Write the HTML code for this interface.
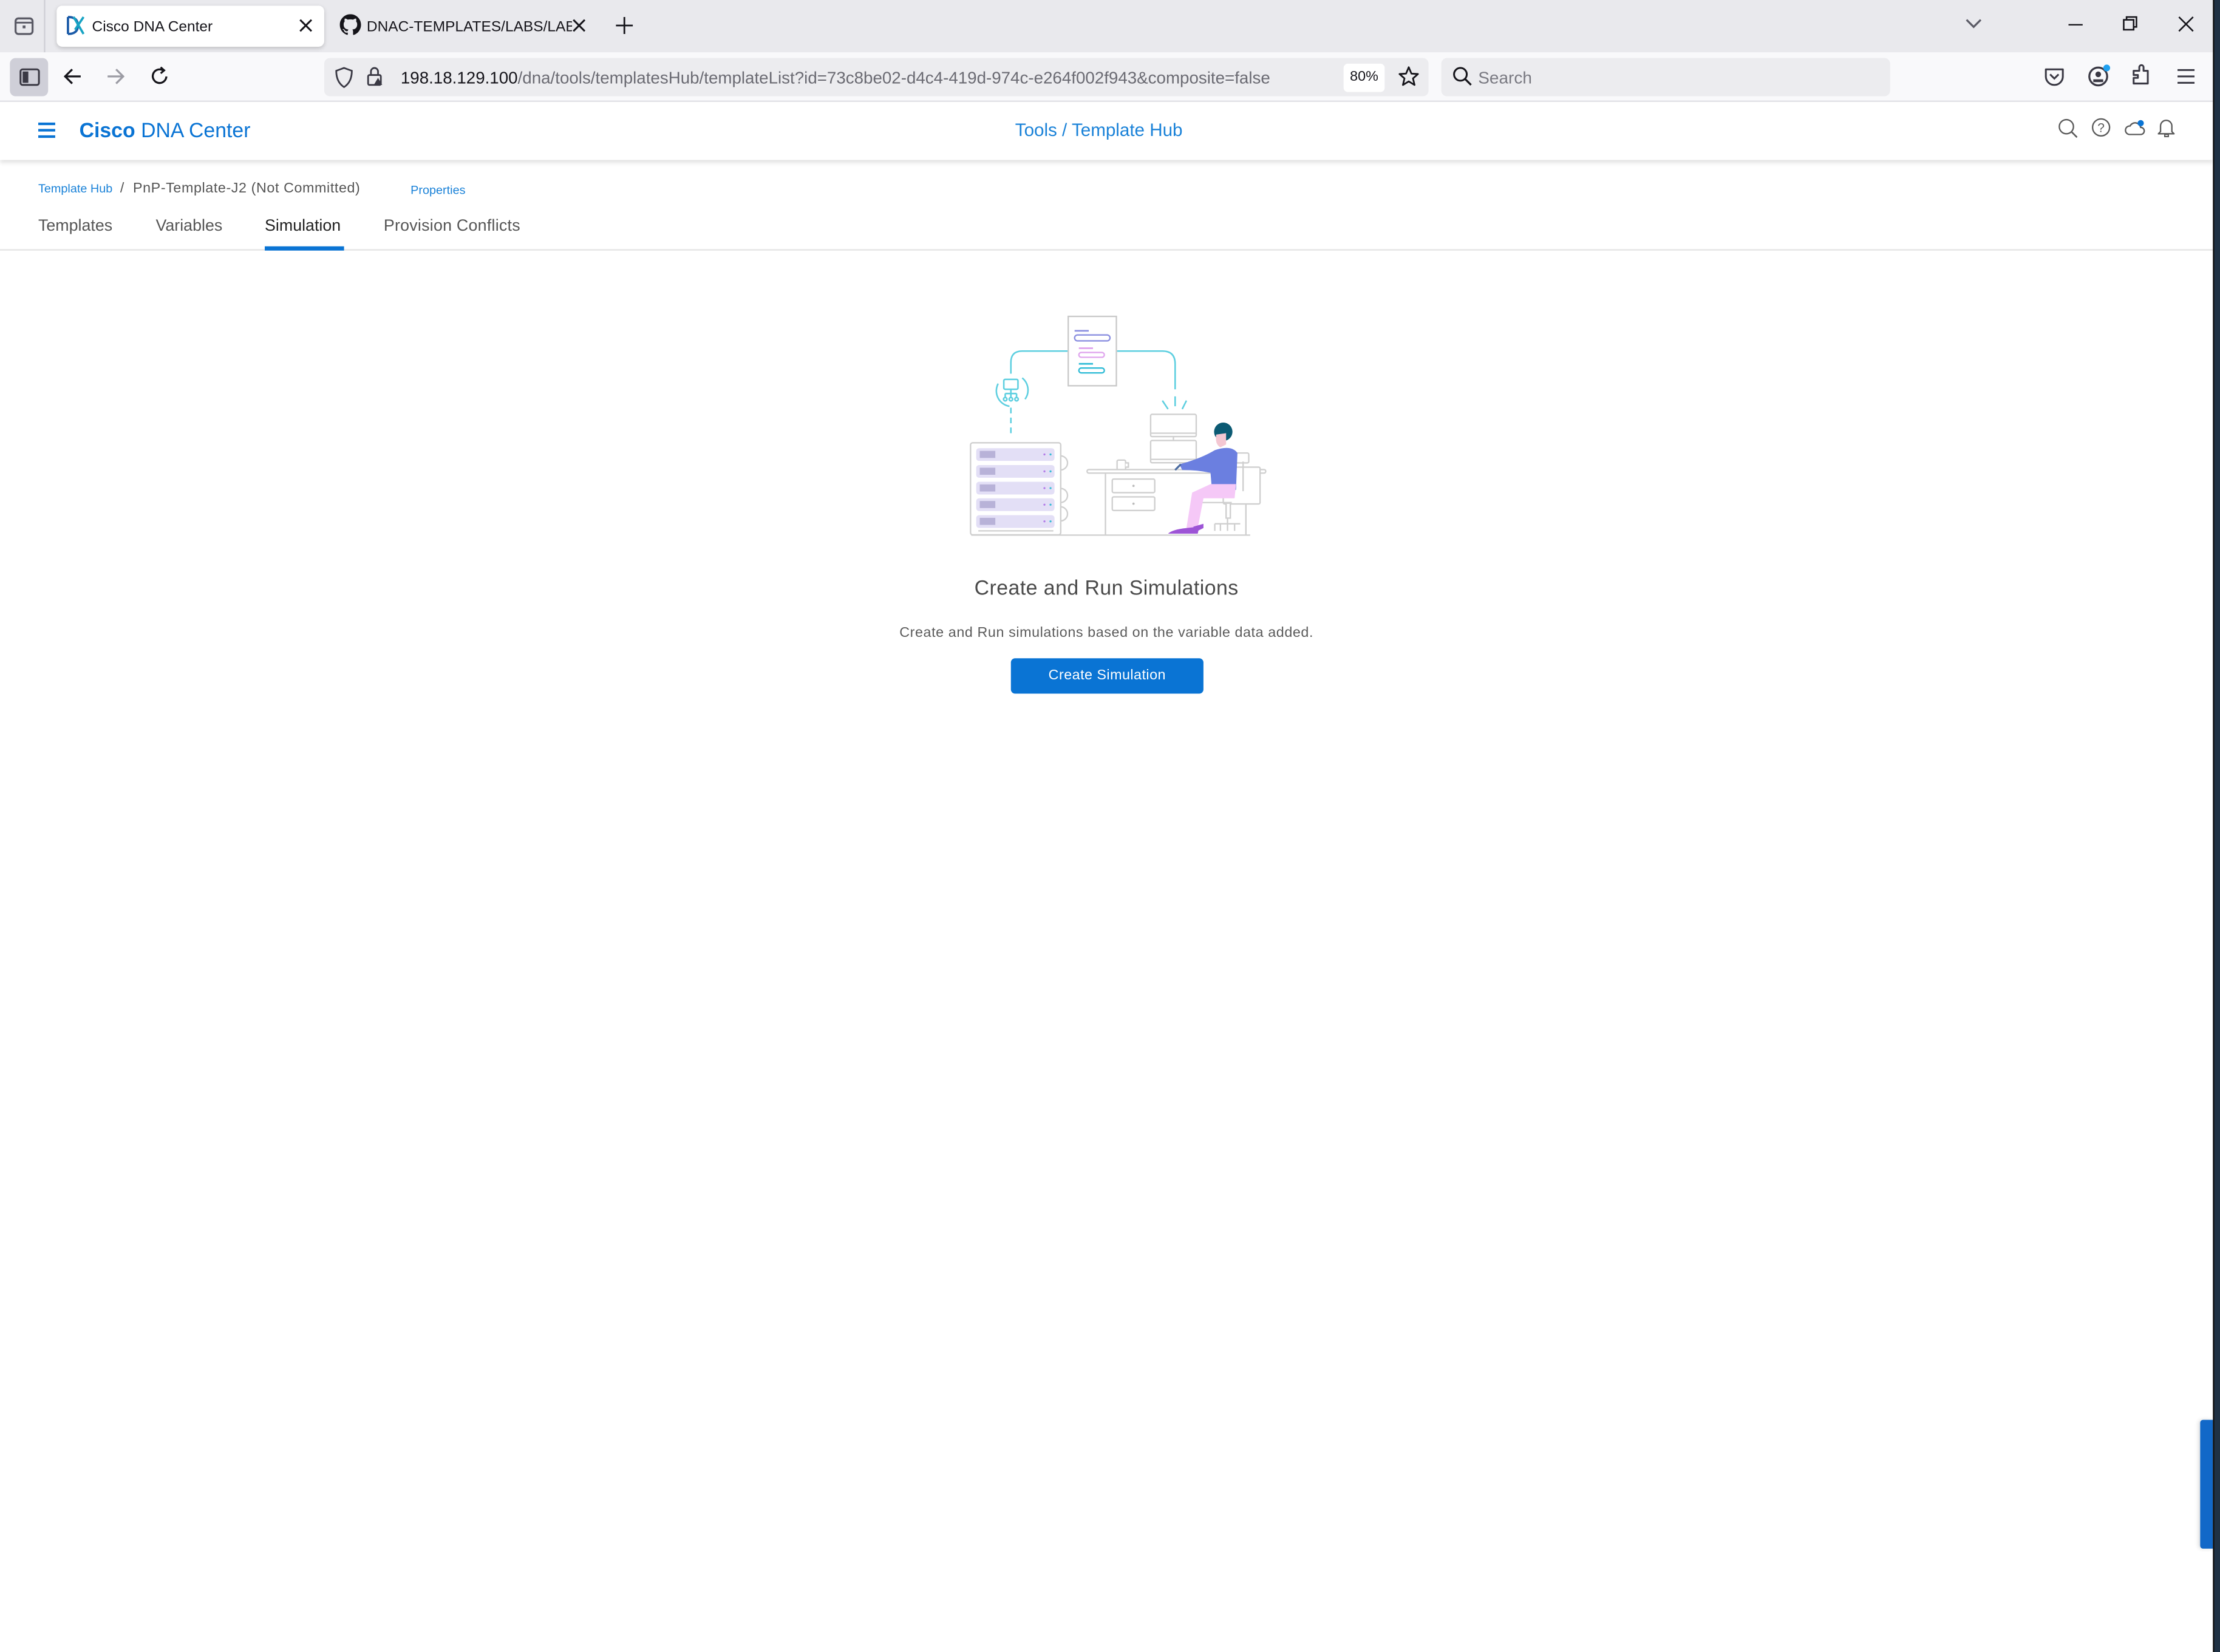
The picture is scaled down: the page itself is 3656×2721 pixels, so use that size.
<!DOCTYPE html>
<html><head><meta charset="utf-8">
<style>
html,body{margin:0;padding:0;width:3656px;height:2720px;overflow:hidden;background:#fff;font-family:"Liberation Sans",Arial,sans-serif;}
#w{position:absolute;left:0;top:0;width:1568px;height:1167px;transform:scale(2.33163);transform-origin:0 0;background:#fff;overflow:hidden;}
.a{position:absolute;white-space:nowrap;}
</style></head><body><div id="w">
<!-- tab bar -->
<div class="a" style="left:0;top:0;width:1568px;height:37px;background:#e9e9ed;"></div>
<svg class="a" style="left:9px;top:10px" width="16" height="16" viewBox="0 0 16 16"><rect x="2" y="3" width="12" height="11" rx="2" fill="none" stroke="#5b5b66" stroke-width="1.4"/><line x1="2" y1="6" x2="14" y2="6" stroke="#5b5b66" stroke-width="1.2"/><rect x="7" y="8" width="2" height="2" fill="#5b5b66"/></svg>
<div class="a" style="left:31px;top:0;width:1px;height:37px;background:#cfcfd6"></div>
<div class="a" style="left:40px;top:4px;width:189px;height:29px;background:#fff;border-radius:4px;box-shadow:0 1px 3px rgba(0,0,0,.18)"></div>
<svg class="a" style="left:47px;top:11px" width="14" height="14" viewBox="0 0 14 14"><path d="M1 1 L1 13 M1 1 Q8 1 8 7 Q8 13 1 13" fill="none" stroke="#1b5ba8" stroke-width="1.6"/><path d="M5 1 L12 13 M12 1 L6 10" fill="none" stroke="#17a3c3" stroke-width="1.6"/></svg>
<div class="a" style="left:65px;top:12.5px;font-size:10.5px;color:#15141a">Cisco DNA Center</div>
<svg class="a" style="left:211px;top:13px" width="10" height="10"><path d="M1 1 L9 9 M9 1 L1 9" stroke="#15141a" stroke-width="1.3"/></svg>
<svg class="a" style="left:240px;top:10px" width="15" height="15" viewBox="0 0 16 16"><path fill="#15141a" d="M8 0C3.58 0 0 3.58 0 8c0 3.54 2.290 6.530 5.470 7.590.4.07.55-.17.55-.38v-1.33c-2.23.48-2.7-1.07-2.7-1.07-.36-.93-.89-1.170-.89-1.170-.73-.5.05-.49.05-.49.8.06 1.230.83 1.230.83.72 1.220 1.870.87 2.330.66.07-.52.28-.87.5-1.070-1.780-.2-3.640-.89-3.640-3.950 0-.87.31-1.590.82-2.150-.08-.2-.36-1.020.08-2.120 0 0 .67-.21 2.2.82.64-.18 1.320-.27 2-.27.68 0 1.360.09 2 .27 1.530-1.040 2.2-.82 2.2-.82.44 1.1.16 1.920.08 2.120.51.56.82 1.270.82 2.150 0 3.070-1.870 3.750-3.650 3.950.29.25.54.73.54 1.480v2.2c0 .21.15.46.55.38A8.013 8.013 0 0016 8c0-4.420-3.580-8-8-8z"/></svg>
<div class="a" style="left:259px;top:12.5px;font-size:10.5px;color:#15141a;width:145px;overflow:hidden">DNAC-TEMPLATES/LABS/LAB-<span style="color:#999">3</span></div>
<svg class="a" style="left:404px;top:13px" width="10" height="10"><path d="M1 1 L9 9 M9 1 L1 9" stroke="#15141a" stroke-width="1.3"/></svg>
<svg class="a" style="left:435px;top:12px" width="12" height="12"><path d="M6 0 V12 M0 6 H12" stroke="#15141a" stroke-width="1.2"/></svg>
<svg class="a" style="left:1387px;top:12px" width="14" height="10"><path d="M2 2 L7 7 L12 2" fill="none" stroke="#5b5b66" stroke-width="1.4"/></svg>
<div class="a" style="left:1461px;top:17px;width:10px;height:1.3px;background:#15141a"></div>
<svg class="a" style="left:1499px;top:11px" width="12" height="12"><rect x="1" y="3" width="7" height="7" fill="none" stroke="#15141a" stroke-width="1.1"/><path d="M3 3 V1 H10 V8 H8" fill="none" stroke="#15141a" stroke-width="1.1"/></svg>
<svg class="a" style="left:1538px;top:11px" width="12" height="12"><path d="M1 1 L11 11 M11 1 L1 11" stroke="#15141a" stroke-width="1.1"/></svg>
<!-- nav bar -->
<div class="a" style="left:0;top:37px;width:1563px;height:34px;background:#f9f9fb;border-bottom:1px solid #e0e0e6"></div>
<div class="a" style="left:7px;top:41px;width:27px;height:27px;background:#cfcfd8;border-radius:4px"></div>
<svg class="a" style="left:13px;top:47px" width="16" height="16"><rect x="1.5" y="2" width="13" height="11" rx="1.5" fill="none" stroke="#3a3944" stroke-width="1.3"/><rect x="3" y="3.5" width="4" height="8" fill="#3a3944"/></svg>
<svg class="a" style="left:43px;top:46px" width="16" height="16"><path d="M14 8 H3 M8 3 L3 8 L8 13" fill="none" stroke="#15141a" stroke-width="1.4"/></svg>
<svg class="a" style="left:74px;top:46px" width="16" height="16"><path d="M2 8 H13 M8 3 L13 8 L8 13" fill="none" stroke="#9c9ca4" stroke-width="1.4"/></svg>
<svg class="a" style="left:105px;top:46px" width="16" height="16"><path d="M12.5 8 A4.8 4.8 0 1 1 10 3.6" fill="none" stroke="#15141a" stroke-width="1.4"/><path d="M8.5 1.5 L11 3.7 L8.5 5.8" fill="none" stroke="#15141a" stroke-width="1.3"/></svg>
<div class="a" style="left:229px;top:41px;width:780px;height:27px;background:#ececef;border-radius:4px"></div>
<svg class="a" style="left:236px;top:47px" width="14" height="16"><path d="M7 1 L12.5 3 Q12.5 11 7 14.5 Q1.5 11 1.5 3 Z" fill="none" stroke="#3a3944" stroke-width="1.2"/></svg>
<svg class="a" style="left:258px;top:46px" width="14" height="16"><rect x="2" y="7" width="9" height="7" rx="1" fill="none" stroke="#3a3944" stroke-width="1.2"/><path d="M4 7 V4.5 A2.5 2.5 0 0 1 9 4.5 V7" fill="none" stroke="#3a3944" stroke-width="1.2"/><path d="M9 9 L12 14 H6 Z" fill="#3a3944"/></svg>
<div class="a" style="left:283px;top:48px;font-size:11.9px;color:#15141a">198.18.129.100<span style="color:#6b6b73">/dna/tools/templatesHub/templateList?id=73c8be02-d4c4-419d-974c-e264f002f943&amp;composite=false</span></div>
<div class="a" style="left:949px;top:45px;width:29px;height:20px;background:#fff;border-radius:3px;font-size:10px;line-height:20px;text-align:center;color:#15141a">80%</div>
<svg class="a" style="left:987px;top:46px" width="16" height="16"><path d="M8 1.5 L9.9 6 L14.5 6.3 L11 9.4 L12.1 14 L8 11.5 L3.9 14 L5 9.4 L1.5 6.3 L6.1 6 Z" fill="none" stroke="#15141a" stroke-width="1.2" stroke-linejoin="round"/></svg>
<div class="a" style="left:1018px;top:41px;width:317px;height:27px;background:#ececef;border-radius:4px"></div>
<svg class="a" style="left:1025px;top:46px" width="16" height="16"><circle cx="6.5" cy="6.5" r="4.5" fill="none" stroke="#15141a" stroke-width="1.3"/><path d="M10 10 L14 14" stroke="#15141a" stroke-width="1.4"/></svg>
<div class="a" style="left:1044px;top:48px;font-size:12px;color:#7a7a82">Search</div>
<svg class="a" style="left:1443px;top:46px" width="16" height="16"><path d="M2 3 H14 V8 A6 6 0 0 1 2 8 Z" fill="none" stroke="#3a3944" stroke-width="1.3" stroke-linejoin="round"/><path d="M5 6.5 L8 9.5 L11 6.5" fill="none" stroke="#3a3944" stroke-width="1.3"/></svg>
<svg class="a" style="left:1474px;top:45px" width="18" height="18"><circle cx="8" cy="9" r="6.3" fill="none" stroke="#3a3944" stroke-width="1.4"/><circle cx="8" cy="7.5" r="2" fill="#3a3944"/><path d="M4.5 12 H11.5" stroke="#3a3944" stroke-width="2"/><circle cx="14" cy="3" r="2.4" fill="#1ea0f0"/></svg>
<svg class="a" style="left:1505px;top:45px" width="16" height="18"><path d="M2 14 V10 H5 V8 H2 V5 H6 V2.5 A1.5 1.5 0 0 1 9 2.5 V5 H12 V14 Z" fill="none" stroke="#3a3944" stroke-width="1.3" stroke-linejoin="round"/></svg>
<svg class="a" style="left:1537px;top:47px" width="14" height="14"><path d="M1 2.5 H13 M1 7 H13 M1 11.5 H13" stroke="#3a3944" stroke-width="1.3"/></svg>
<!-- app header -->
<div class="a" style="left:0;top:72px;width:1563px;height:41px;background:#fff;box-shadow:0 2px 3px rgba(0,0,0,.12)"></div>
<svg class="a" style="left:27px;top:86px" width="13" height="12"><path d="M0 1.5 H12 M0 6 H12 M0 10.5 H12" stroke="#0a74d4" stroke-width="1.8"/></svg>
<div class="a" style="left:56px;top:84.5px;font-size:14.5px;color:#0a74d4"><b>Cisco</b> DNA Center</div>
<div class="a" style="left:717px;top:84.5px;font-size:12.7px;color:#1a82d8">Tools / Template Hub</div>
<svg class="a" style="left:1453px;top:83px" width="15" height="15"><circle cx="6.5" cy="6.5" r="5" fill="none" stroke="#5a5a5a" stroke-width="1"/><path d="M10 10 L14 14" stroke="#5a5a5a" stroke-width="1.1"/></svg>
<svg class="a" style="left:1477px;top:83px" width="15" height="15"><circle cx="7" cy="7" r="6" fill="none" stroke="#5a5a5a" stroke-width="1"/><text x="7" y="10.3" font-size="9" text-anchor="middle" fill="#5a5a5a" font-family="Liberation Sans">?</text></svg>
<svg class="a" style="left:1500px;top:83px" width="16" height="15"><path d="M4 12 H12 A2.5 2.5 0 0 0 12 7 A4 4 0 0 0 4.5 6 A3 3 0 0 0 4 12 Z" fill="none" stroke="#5a5a5a" stroke-width="1"/><circle cx="12" cy="4" r="2.2" fill="#0a74d4"/></svg>
<svg class="a" style="left:1523px;top:82px" width="15" height="16"><path d="M3 11 V7 A4 4 0 0 1 11 7 V11 L12.5 12.5 H1.5 Z" fill="none" stroke="#5a5a5a" stroke-width="1" stroke-linejoin="round"/><path d="M6 13 H8.5 V14.5 H6 Z" fill="none" stroke="#5a5a5a" stroke-width=".9"/></svg>
<!-- breadcrumb -->
<div class="a" style="left:27px;top:127px;font-size:8.5px;color:#1a82d8;line-height:12px">Template Hub <span style="color:#555;font-size:10px;letter-spacing:.25px">&nbsp;/&nbsp; PnP-Template-J2 (Not Committed)</span></div>
<div class="a" style="left:290px;top:127.5px;font-size:8.5px;color:#1a82d8;line-height:12px">Properties</div>
<div class="a" style="left:27px;top:153.5px;font-size:11.5px;color:#555">Templates</div>
<div class="a" style="left:110px;top:153.5px;font-size:11.5px;color:#555">Variables</div>
<div class="a" style="left:187px;top:153.5px;font-size:11.5px;color:#222">Simulation</div>
<div class="a" style="left:271px;top:153.5px;font-size:11.5px;color:#555;letter-spacing:.1px">Provision Conflicts</div>
<div class="a" style="left:0;top:176px;width:1563px;height:1px;background:#e4e4e4"></div>
<div class="a" style="left:187px;top:174px;width:56px;height:3px;background:#0a74d4"></div>
<!-- illustration -->
<svg class="a" style="left:643px;top:206px" width="300" height="300" viewBox="643 206 300 300">
<g fill="none" stroke="#5ecfe0" stroke-width="1.1">
<path d="M754 248 H722 Q714 248 714 256 V264"/>
<path d="M789 248 H821 Q830 248 830 257 V275"/>
<path d="M705 271 A11 11 0 0 0 713 287 M722 267 A11 11 0 0 1 724 282"/>
<path d="M714 288 V307" stroke-dasharray="4 3"/>
<path d="M821 283 L825 289 M830 280 V287 M838 283 L835 289"/>
<rect x="709" y="268" width="10" height="7" rx="1"/>
<path d="M714 275 V278 M710 278 H718 M710 278 V281 M714 278 V281 M718 278 V281"/>
<circle cx="710" cy="282" r="1.2"/><circle cx="714" cy="282" r="1.2"/><circle cx="718" cy="282" r="1.2"/>
</g>
<rect x="754.5" y="223.5" width="34" height="49" fill="#fff" stroke="#c9c9c9" stroke-width="1"/>
<path d="M759 233.7 H769" stroke="#8b8fe0" stroke-width="1.2"/>
<rect x="759" y="236.6" width="25" height="4.2" rx="2.1" fill="none" stroke="#8b8fe0" stroke-width="1"/>
<path d="M762 246 H772" stroke="#e0a6ee" stroke-width="1.2"/>
<rect x="762" y="249" width="18" height="3.4" rx="1.7" fill="none" stroke="#e0a6ee" stroke-width="1"/>
<path d="M762 257 H772" stroke="#30bcd6" stroke-width="1.2"/>
<rect x="762" y="260" width="18" height="3.4" rx="1.7" fill="none" stroke="#30bcd6" stroke-width="1"/>
<!-- rack -->
<rect x="685.5" y="312.8" width="63.7" height="65" rx="1.5" fill="#fff" stroke="#cfcfcf" stroke-width="1"/>
<g fill="none" stroke="#cfcfcf" stroke-width="1"><path d="M749 322 A4.5 4.5 0 0 1 749 332"/><path d="M749 345 A4.5 4.5 0 0 1 749 355"/><path d="M749 358 A4.5 4.5 0 0 1 749 368"/><path d="M691 375 H744"/></g>
<g fill="#e3dff6"><rect x="689.5" y="316.6" width="55.3" height="9" rx="2"/><rect x="689.5" y="328.5" width="55.3" height="9" rx="2"/><rect x="689.5" y="340.3" width="55.3" height="9" rx="2"/><rect x="689.5" y="352" width="55.3" height="9" rx="2"/><rect x="689.5" y="363.9" width="55.3" height="9" rx="2"/></g>
<g fill="#b8b2d8"><rect x="692" y="318.5" width="11" height="5"/><rect x="692" y="330.4" width="11" height="5"/><rect x="692" y="342.2" width="11" height="5"/><rect x="692" y="353.9" width="11" height="5"/><rect x="692" y="365.8" width="11" height="5"/></g>
<g><circle cx="737.7" cy="321" r=".7" fill="#b27ae8"/><circle cx="742" cy="321" r=".7" fill="#30bcd6"/><circle cx="737.7" cy="333" r=".7" fill="#b27ae8"/><circle cx="742" cy="333" r=".7" fill="#30bcd6"/><circle cx="737.7" cy="344.8" r=".7" fill="#b27ae8"/><circle cx="742" cy="344.8" r=".7" fill="#30bcd6"/><circle cx="737.7" cy="356.5" r=".7" fill="#b27ae8"/><circle cx="742" cy="356.5" r=".7" fill="#30bcd6"/><circle cx="737.7" cy="368.3" r=".7" fill="#b27ae8"/><circle cx="742" cy="368.3" r=".7" fill="#30bcd6"/></g>
<!-- desk -->
<g fill="#fff" stroke="#cfcfcf" stroke-width="1">
<rect x="812.7" y="292.7" width="32.2" height="15.7" rx="1"/><path d="M813 306 H845"/>
<path d="M828.8 308.4 V311"/>
<rect x="812.7" y="311.2" width="32.2" height="15.7" rx="1"/><path d="M813 324.5 H845"/>
<rect x="789" y="325" width="6" height="7" rx="1"/><path d="M795 327 H797 V330 H795"/>
<rect x="767.8" y="331.7" width="126.2" height="2.5" rx="1.2"/>
<path d="M780.8 334 V378 M686 378 H883"/>
<rect x="785.6" y="338.4" width="30" height="9.6" rx="1"/>
<rect x="785.6" y="351" width="30" height="9.6" rx="1"/>
<rect x="864" y="330" width="26" height="26" rx="1"/>
<rect x="870" y="320" width="12" height="7" rx="1"/>
<path d="M878 326 V347"/>
<path d="M848 355 H870 M866 356 V366 H869 V356 M867 366 V370 M858 370 H876 M858 370 V375 M862 370 V375 M867 370 V375 M872 370 V375"/>
<path d="M880 356 V378"/>
</g>
<circle cx="800.6" cy="343.2" r=".8" fill="#bbb"/><circle cx="800.6" cy="355.8" r=".8" fill="#bbb"/>
<!-- person -->
<path d="M858 318 Q870 314 874 320 L873 346 Q865 348 856 346 L855 334 Q846 332 835 332 L833 328 Q848 324 858 318 Z" fill="#6b7fe0"/>
<path d="M855 342 L873 342 L872 352 L850 352 L846 373 L838 373 L842 348 Z" fill="#f5c8f7"/>
<path d="M838 373 L847 372 L846 377 L825 377 Q828 374 838 373 Z" fill="#9d54d6"/>
<path d="M843 372 L850 370 L850 373 L842 377 Z" fill="#9d54d6"/>
<circle cx="864" cy="305" r="6.5" fill="#0b5a73"/>
<path d="M859 307 Q858 314 862 316 L866 314 L866 306 Z" fill="#f4c7d2"/>
<path d="M830 332 L834 328" stroke="#4a6aa0" stroke-width="1.4"/>
</svg>
<div class="a" style="left:0;top:407.5px;width:1563px;text-align:center;font-size:14.5px;color:#4a4a4a;letter-spacing:.2px">Create and Run Simulations</div>
<div class="a" style="left:0;top:441.5px;width:1563px;text-align:center;font-size:10px;color:#5b5b5b;letter-spacing:.25px">Create and Run simulations based on the variable data added.</div>
<div class="a" style="left:714px;top:465px;width:136px;height:25px;background:#0a74d4;border-radius:3px;color:#fff;font-size:10px;line-height:25px;text-align:center;letter-spacing:.2px">Create Simulation</div>
<!-- right edge -->
<div class="a" style="left:1554px;top:1003px;width:9px;height:91px;background:#1268c8;border-radius:2px 0 0 2px;box-shadow:-1px 0 3px rgba(0,0,0,.15)"></div>
<div class="a" style="left:1563px;top:0;width:5px;height:1167px;background:#1f3144;border-left:1px solid #111"></div>
</div></body></html>
